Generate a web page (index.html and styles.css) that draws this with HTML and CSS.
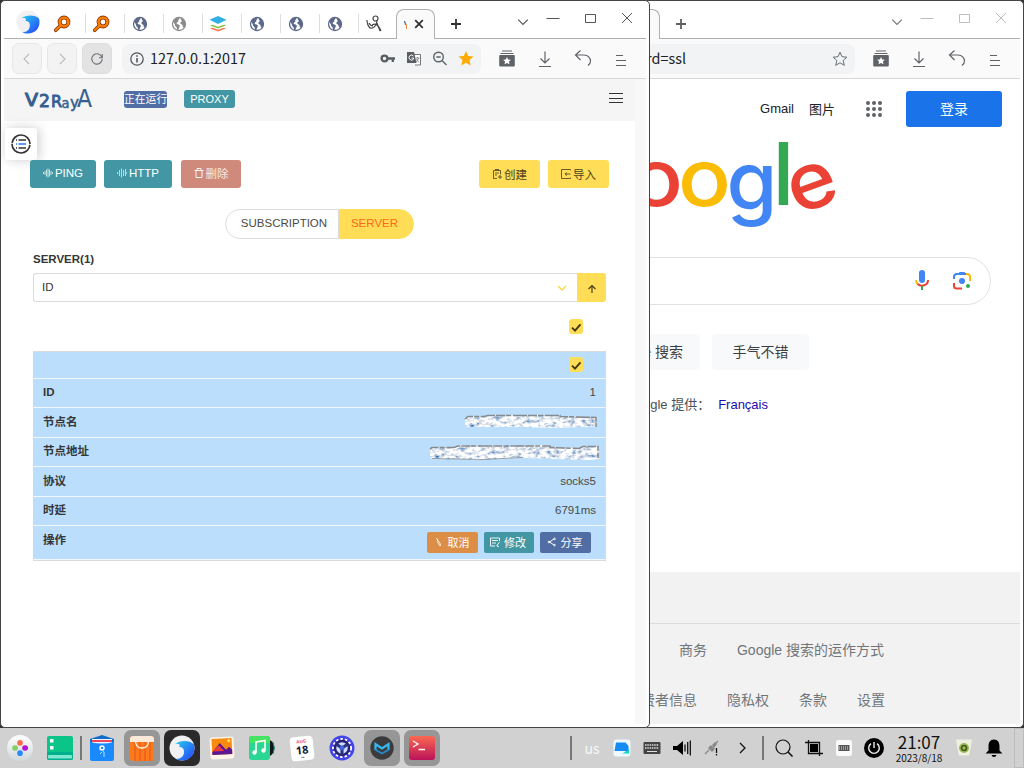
FILE: index.html
```html
<!DOCTYPE html>
<html lang="zh-CN">
<head>
<meta charset="utf-8">
<title>v2rayA</title>
<link rel="stylesheet" href="styles.css">
</head>
<body>
<svg class="defs" width="0" height="0">
  <defs>
    <symbol id="globe" viewBox="0 0 16 16"><circle cx="8" cy="8" r="6.500" fill="#fff" stroke="currentColor" stroke-width="1.300"/><path fill="currentColor" d="M2 5.500 4.500 2.600 7.800 1.700 8.500 3 7 4.200 7.600 5.200 6 6.500 5.600 8 7.600 8.400 9 9.800 8.300 11.500 7.200 13.900 6 14 5.700 11.500 4.200 10 3.800 8.300zM9.600 3 11.500 2.600 14 5.500 14.400 9 12.800 11.800 11.600 10.600 11.500 9 9.500 7.800 9.600 6 11 5.200z"/></symbol>
    <symbol id="key-tab" viewBox="0 0 18 18"><g fill="none" stroke-linecap="round"><path d="M8 10 2.700 15.300" stroke="#7d3309" stroke-width="3.600"/><circle cx="11" cy="7" r="4.400" stroke="#8a3a0a" stroke-width="4"/><circle cx="11" cy="7" r="4.400" stroke="#ff7e00" stroke-width="2.400"/><path d="M8 10 2.700 15.300" stroke="#ff7e00" stroke-width="2"/></g></symbol>
    <symbol id="chev" viewBox="0 0 10 10"><path d="M1 3l4 4 4-4" fill="none" stroke="currentColor" stroke-width="1"/></symbol>
    <symbol id="plus" viewBox="0 0 12 12"><path d="M6 1v10M1 6h10" stroke="currentColor" stroke-width="1.800"/></symbol>
    <symbol id="win-min" viewBox="0 0 14 14"><path d="M.5 8.500h13" stroke="currentColor"/></symbol>
    <symbol id="win-max" viewBox="0 0 14 14"><path d="M2.500 4.500h10v8h-10z" fill="none" stroke="currentColor"/></symbol>
    <symbol id="win-close" viewBox="0 0 14 14"><path d="M2 3l10 10M12 3 2 13" stroke="currentColor"/></symbol>
    <symbol id="collect" viewBox="0 0 18 18"><path d="M4 1h10M2.500 3.500h13" stroke="currentColor" stroke-width="1.200"/><rect x="1.200" y="5" width="15.600" height="11.500" rx="1" fill="currentColor"/><path fill="#fff" d="M9 7l1.200 2.500 2.700.3-2 1.800.6 2.700L9 13l-2.500 1.300.6-2.700-2-1.800 2.700-.3z"/></symbol>
    <symbol id="down" viewBox="0 0 18 18"><path d="M9 1.500v11M4.500 8.500 9 13l4.500-4.500M3 16.500h12" fill="none" stroke="currentColor" stroke-width="1.200"/></symbol>
    <symbol id="undo" viewBox="0 0 18 18"><path d="M6.500.500 1.500 5l5 5M1.500 5H10c4 0 6.500 3 6.500 6 0 2-1 3.500-2.500 4.500" fill="none" stroke="currentColor" stroke-width="1.200"/></symbol>
    <symbol id="menu" viewBox="0 0 18 18"><path d="M4 5.500h7M4 10.500h10M4 15.500h10" stroke="currentColor" stroke-width="1.200"/></symbol>
    <symbol id="tick" viewBox="0 0 14 15"><path d="M3 8.700l3 3 5.500-6.300" fill="none" stroke="#43380f" stroke-width="1.900"/></symbol>
    <linearGradient id="sky" x1="0" y1="0" x2="1" y2="1"><stop offset="0" stop-color="#25cfe8"/><stop offset="1" stop-color="#283cff"/></linearGradient>
    <symbol id="wave" viewBox="0 0 26 26"><circle cx="13" cy="13" r="12.500" fill="#f1f1f3"/><path d="M6 9C11 5 21 5 25 9.500 27 18 22 25 13 25.500c-3 0-5-.7-6-1.500 5 0 8-3 8-7s-2-5-5-5c2-2 0-4-4-3z" fill="url(#sky)"/></symbol>
    <filter id="smear" x="0" y="0" width="1" height="1"><feTurbulence type="fractalNoise" baseFrequency=".16 .28" numOctaves="3" seed="8"/><feColorMatrix values="2.200 0 0 0 -.28  1.800 0 0 0 -.04  1.100 0 0 0 .35  0 0 0 0 1"/><feComposite in2="SourceGraphic" operator="in"/></filter>
  </defs>
</svg>

<section class="window google-window">
  <div class="tabs tabs-back">
    <div class="back-tab"></div>
    <svg class="plus"><use href="#plus"/></svg>
    <div class="win-ctl faded"><svg class="chev"><use href="#chev"/></svg><svg><use href="#win-min"/></svg><svg><use href="#win-max"/></svg><svg><use href="#win-close"/></svg></div>
  </div>
  <div class="toolbar">
    <div class="url url-back"><span>google.com/?gws_rd=ssl</span><svg class="i16" viewBox="0 0 16 16"><path fill="none" stroke="#6b6f73" d="M8 1.200l2 4.500 4.900.5-3.700 3.300 1.100 4.800L8 11.800l-4.300 2.500 1.100-4.800-3.700-3.300 4.900-.5z"/></svg></div>
    <div class="tools"><svg><use href="#collect"/></svg><svg><use href="#down"/></svg><svg><use href="#undo"/></svg><svg><use href="#menu"/></svg></div>
  </div>
  <main class="google">
    <header class="g-head"><span>Gmail</span><span class="g-img">图片</span>
      <svg class="grid" viewBox="0 0 16 16" fill="#5f6368"><circle cx="2" cy="2" r="2"/><circle cx="8" cy="2" r="2"/><circle cx="14" cy="2" r="2"/><circle cx="2" cy="8" r="2"/><circle cx="8" cy="8" r="2"/><circle cx="14" cy="8" r="2"/><circle cx="2" cy="14" r="2"/><circle cx="8" cy="14" r="2"/><circle cx="14" cy="14" r="2"/></svg>
      <b class="login">登录</b></header>
    <svg class="g-logo" viewBox="0 0 200 92">
      <text x="-4" y="66" fill="#ea4335" textLength="53" lengthAdjust="spacingAndGlyphs">o</text>
      <text x="44" y="66" fill="#fbbc05" textLength="53" lengthAdjust="spacingAndGlyphs">o</text>
      <text class="g-g" x="92.500" y="69.500" fill="#4285f4" textLength="51" lengthAdjust="spacingAndGlyphs">g</text>
      <text class="g-l" x="138.500" y="65" fill="#34a853">l</text>
      <text x="-24.500" y="18" fill="#ea4335" transform="translate(179.500 50) rotate(-20)" textLength="49" lengthAdjust="spacingAndGlyphs">e</text>
    </svg>
    <div class="g-search">
      <svg class="mic" viewBox="0 0 16 22"><rect x="5" y="0" width="6" height="13" rx="3" fill="#4285f4"/><path d="M2 10c0 2 .7 3.300 2 4.400" fill="none" stroke="#fbbc05" stroke-width="2"/><path d="M3.500 14c2.500 2.200 6.500 2.200 9 0 1-1 1.600-2.200 1.600-4" fill="none" stroke="#ea4335" stroke-width="2"/><path d="M8 16v4" stroke="#34a853" stroke-width="2"/></svg>
      <svg class="lens" viewBox="0 0 20 20" fill="none" stroke-width="2"><path d="M2 8V6c0-2 1-3 3-3h9" stroke="#4285f4"/><path d="M6 3l1.500-2h5L14 3z" fill="#4285f4"/><path d="M14 3h1c2 0 3 1 3 3v4" stroke="#fbbc05"/><path d="M2 12v3c0 2 1 2.500 3 2.500h5" stroke="#ea4335"/><circle cx="10" cy="10" r="3" fill="#4285f4"/><circle cx="16" cy="15" r="2" fill="#34a853"/></svg>
    </div>
    <div class="g-btns"><span>Google 搜索</span><span>手气不错</span></div>
    <div class="g-lang"><span>Google 提供：</span><a>Français</a></div>
    <footer><div class="f-place"></div><div class="f-row"><span>商务</span><span>Google 搜索的运作方式</span></div><div class="f-row f-two"><span>消费者信息</span><span>隐私权</span><span>条款</span><span>设置</span></div></footer>
  </main>
</section>

<section class="window v2-window">
  <div class="tabs">
    <svg class="brand"><use href="#wave"/></svg>
    <div class="tab"><svg><use href="#key-tab"/></svg></div>
    <div class="tab"><svg><use href="#key-tab"/></svg></div>
    <div class="tab"><svg class="blue"><use href="#globe"/></svg></div>
    <div class="tab"><svg class="gray"><use href="#globe"/></svg></div>
    <div class="tab"><svg viewBox="0 0 18 18"><path d="M9 10.500l8 3-8 3-8-3z" fill="#ff7b55"/><path d="M9 8.800l8 3-8 3-8-3z" fill="#fff"/><path d="M9 7.500l8 3-8 3-8-3z" fill="#8ac44a"/><path d="M9 5.800l8 3-8 3-8-3z" fill="#fff"/><path d="M9 1l8.500 3.700L9 9 .5 4.700z" fill="#31aee3"/></svg></div>
    <div class="tab"><svg class="blue"><use href="#globe"/></svg></div>
    <div class="tab"><svg class="blue"><use href="#globe"/></svg></div>
    <div class="tab"><svg class="blue"><use href="#globe"/></svg></div>
    <div class="tab last"><svg viewBox="0 0 18 18" fill="none" stroke="#484848" stroke-width="1.200"><path d="M2 5c0 3 1 6 3 8 3 1 7-2 7-8M4 8c1 2 2 3 4 3M7 10c3-2 6-1 9 6M12 8l3 8"/><circle cx="10.500" cy="3.500" r="2.500"/></svg></div>
    <div class="tab-active"><svg class="sliver" viewBox="0 0 3 10"><path d="M.5 1l2 4v4" fill="none" stroke="#e88a42"/><path d="M.5 1l1 4" stroke="#2860a0"/></svg><svg class="x" viewBox="0 0 10 10"><path d="M1.200 1.200l7.600 7.600M8.800 1.200 1.200 8.800" stroke="#333" stroke-width="1.800"/></svg></div>
    <svg class="plus"><use href="#plus"/></svg>
    <div class="win-ctl"><svg class="chev"><use href="#chev"/></svg><svg><use href="#win-min"/></svg><svg><use href="#win-max"/></svg><svg><use href="#win-close"/></svg></div>
  </div>
  <div class="toolbar">
    <div class="nav"><i><svg viewBox="0 0 12 12"><path d="M8 1 3 6l5 5"/></svg></i><i><svg viewBox="0 0 12 12"><path d="M4 1l5 5-5 5"/></svg></i><i class="reload"><svg viewBox="0 0 12 12"><path d="M11 4.500A5.200 5.200 0 1 0 11.200 6M11.300 1v3.700H8"/></svg></i></div>
    <div class="url">
      <svg class="i14" viewBox="0 0 14 14"><circle cx="7" cy="7" r="6.200" fill="none" stroke="#55585c" stroke-width="1.300"/><path d="M7 6v4.500M7 3.200v1.600" stroke="#55585c" stroke-width="1.600"/></svg>
      <span class="addr">127.0.0.1:2017</span>
      <svg class="i16" viewBox="0 0 16 16"><circle cx="4.500" cy="7.500" r="2.900" fill="none" stroke="#5a5d61" stroke-width="2.300"/><path d="M7 7.500h8M12.800 7.500V11" stroke="#5a5d61" stroke-width="2.300"/></svg>
      <svg class="i16" viewBox="0 0 16 16"><path d="M7 3.500h7.500V14H9" fill="#fff" stroke="#777"/><path d="M1 1h7l2.500 11H1z" fill="#5a5d61"/><path d="M7.500 5A2.500 2.500 0 1 0 7.600 8V7H5.500" fill="none" stroke="#fff"/><path d="M9.500 7h4M11.500 6v1M10 11l3-4M10.500 8l2.500 3.500" stroke="#777" fill="none" stroke-width=".8"/></svg>
      <svg class="i16" viewBox="0 0 16 16" fill="none" stroke="#5f6368" stroke-width="1.400"><circle cx="6.500" cy="6" r="4.800"/><path d="M10 9.500l4.500 4.500M4.300 6h4.400"/></svg>
      <svg class="i16" viewBox="0 0 16 16"><path fill="#ffaa00" d="M8 0l2.200 4.900 5.300.6-4 3.600 1.200 5.400L8 11.800l-4.700 2.700 1.200-5.400-4-3.600 5.300-.6z"/></svg>
    </div>
    <div class="tools"><svg><use href="#collect"/></svg><svg><use href="#down"/></svg><svg><use href="#undo"/></svg><svg><use href="#menu"/></svg></div>
  </div>
  <div class="page">
    <main class="app">
      <header class="app-head">
        <svg class="v-logo" viewBox="0 0 72 30"><g fill="#365f91" stroke="#365f91"><text x="1" y="20" font-size="17" stroke-width="1.100" textLength="13" lengthAdjust="spacingAndGlyphs">V</text><text x="15" y="21" font-size="17" stroke-width=".9" textLength="11" lengthAdjust="spacingAndGlyphs">2</text><text x="27" y="21" font-size="16" stroke-width=".9" textLength="11" lengthAdjust="spacingAndGlyphs">R</text><text x="37.500" y="21.500" font-size="14" stroke-width=".5" textLength="8" lengthAdjust="spacingAndGlyphs">a</text><text x="46" y="22" font-size="15" stroke-width=".5" textLength="9" lengthAdjust="spacingAndGlyphs">y</text><text x="53" y="21" font-size="24" stroke-width=".2" textLength="15" lengthAdjust="spacingAndGlyphs">A</text></g></svg>
        <span class="running">正在运行</span><span class="proxy">PROXY</span>
        <svg class="burger" viewBox="0 0 14 10"><path d="M0 .5h14M0 5.500h14M0 9.500h14" stroke="#333"/></svg>
      </header>
      <div class="float"><svg viewBox="0 0 20 20" fill="none"><circle cx="10" cy="10" r="9" stroke="#333" stroke-width="1.700" stroke-dasharray="27.270 1" stroke-dashoffset="-1"/><path d="M7.500 6H15M7.500 14H15M5 6h1M5 14h1" stroke="#333" stroke-width="1.300"/><path d="M7.500 10H15M5 10h1" stroke="#2b74ff" stroke-width="1.500"/></svg></div>
      <div class="actions">
        <span class="btn teal ping"><svg viewBox="0 0 10 10" stroke="#c3e2e6"><path d="M.5 4v2M2 3v4M3.500 1.500v7M5 .5v9M6.500 1.500v7M8 3v4M9.500 4v2"/></svg>PING</span>
        <span class="btn teal http"><svg viewBox="0 0 10 10" stroke="#d7edf0"><path d="M.5 4v2M2.500 2v6M4.500 .5v9M6.500 2v6M8.500 1v7M9.700 4v2" stroke-width=".8"/></svg>HTTP</span>
        <span class="btn red"><svg viewBox="0 0 10 10" fill="none" stroke="#fff"><path d="M.5 2.500h9M2 2.500v7h6v-7M3 2V.5h4V2" stroke-width=".9"/></svg>删除</span>
        <span class="btn yellow create"><svg viewBox="0 0 10 10" fill="none" stroke="#5a4d20"><path d="M5 9.500H1.500V1.500h7v4M3 .5h4M3 4h4M3 6h2M6 8h4M8 6v4" stroke-width=".9"/></svg>创建</span>
        <span class="btn yellow"><svg viewBox="0 0 10 10" fill="none" stroke="#5a4d20"><path d="M9.500 1.500v-1H.5v9h9v-1M9.500 5H4M6 3.500 4 5l2 1.500" stroke-width=".9"/></svg>导入</span>
      </div>
      <div class="switch"><span>SUBSCRIPTION</span><span class="on">SERVER</span></div>
      <div class="servers">
        <h2>SERVER(1)</h2>
        <div class="sort"><div class="select"><span>ID</span><svg viewBox="0 0 10 10"><path d="M1 3l4 4 4-4" fill="none" stroke="#ffd43b" stroke-width="1.300"/></svg></div><div class="up"><svg viewBox="0 0 10 10"><path d="M5 9V1.500M1.500 5 5 1.500 8.500 5" fill="none" stroke="#4d421a" stroke-width="1.200"/></svg></div></div>
        <div class="all"><svg class="check"><use href="#tick"/></svg></div>
        <div class="table">
          <div class="row r-check"><svg class="check"><use href="#tick"/></svg></div>
          <div class="row"><b>ID</b><span>1</span></div>
          <div class="row tall"><b class="cn">节点名</b><svg class="smear s1" viewBox="0 0 134 17"><path filter="url(#smear)" d="M1 5 4 3H20L24 2H96V3L133 4V14H118L94 15 54 14 3 14 1 12z"/><path d="M1 6 4 3.500H20L24 2.500H96V3.500L132 4.500V14" fill="none" stroke="#858a90" stroke-width="1.600" stroke-dasharray="9 1 5 2 14 1"/></svg></div>
          <div class="row"><b class="cn">节点地址</b><svg class="smear s2" viewBox="0 0 171 17"><path filter="url(#smear)" d="M1 5 3 3H25L29 1H121V3L150 4 154 2H170V15L160 16 94 14 54 16 3 15 1 12z"/><path d="M1 5 3 3.500H25L29 2H121V3.500L150 4.500 154 2.500H169V14" fill="none" stroke="#858a90" stroke-width="1.600" stroke-dasharray="9 1 5 2 14 1"/><path d="M3 14.500l51 1 40-2" fill="none" stroke="#858a90" stroke-width=".8"/></svg></div>
          <div class="row tall"><b class="cn">协议</b><span>socks5</span></div>
          <div class="row"><b class="cn">时延</b><span>6791ms</span></div>
          <div class="row r-ops"><b>操作</b><div class="ops">
            <span class="orange"><svg viewBox="0 0 10 10" fill="none" stroke="#fff"><path d="M2.500 1 4 4l2 2 .5 3M3.500 2l.5 4 2 3" stroke-width=".8"/></svg>取消</span>
            <span class="teal"><svg viewBox="0 0 10 10" fill="none" stroke="#fff"><path d="M9.500 4V1H.5v8H5M2 3.500h6M2 6h4M6.500 9l3-4M7 9.300h2" stroke-width=".9"/></svg>修改</span>
            <span class="indigo"><svg viewBox="0 0 10 10" fill="none" stroke="#fff"><path d="M7 2 2.500 5 7 8"/><circle cx="7.500" cy="1.900" r=".8"/><circle cx="1.900" cy="5" r=".8"/><circle cx="7.500" cy="8.100" r=".8"/></svg>分享</span></div></div>
        </div>
      </div>
    </main>
    <div class="gutter"></div>
  </div>
</section>

<nav class="dock">
  <div class="slot"><svg viewBox="0 0 36 36"><defs><linearGradient id="lg" x2="0" y2="1"><stop stop-color="#fff"/><stop offset="1" stop-color="#cfd8da"/></linearGradient></defs><circle cx="18" cy="18" r="13" fill="url(#lg)"/><g stroke-width="5.600" stroke-linecap="round"><path d="M18 12.800v.2" stroke="#ff6c4c"/><path d="M13 18h.2" stroke="#88cc66"/><path d="M23 18h.2" stroke="#b414cf"/><path d="M18 23v.2" stroke="#2789ff"/></g></svg></div>
  <div class="slot"><svg viewBox="0 0 36 36"><rect x="5" y="6" width="26" height="24" rx="2" fill="#0ac488"/><path d="M5 22h26v6q0 2-2 2H7q-2 0-2-2z" fill="#00b08c"/><rect x="6" y="25" width="24" height="3.500" rx="1" fill="#7ee8d0"/><path d="M8 9h3.500v3.500H8zM8 16h3.500v3.500H8z" fill="#fff"/></svg></div>
  <i class="sep"></i>
  <div class="slot"><svg viewBox="0 0 36 36"><path d="M6 9 18 5l12 4v8H6z" fill="#136cc6"/><path d="M8 9h20v8H8z" fill="#eef1ff"/><path d="M8 10h20v2H8z" fill="#ee4860"/><path d="M6 12q12 3 24 0v17q0 2-2 2H8q-2 0-2-2z" fill="#1989fc"/><circle cx="18" cy="18" r="2" fill="none" stroke="#fff" stroke-width="1.500"/><path d="M18 20l2 2v5M18 22l-2 2" stroke="#b8e3ff" fill="none"/></svg></div>
  <div class="slot hot"><svg viewBox="0 0 36 36"><rect x="6" y="6" width="24" height="25" rx="3" fill="#fc7a1e"/><path d="M11 12v19M16 12v19M21 12v19M26 12v19" stroke="#f2651a" stroke-width="2"/><path d="M6 12V9q0-3 3-3h18q3 0 3 3v3z" fill="#fae8d9"/><path d="M11.500 12c1 8 12 8 13 0" fill="none" stroke="#fff0df" stroke-width="1.300"/></svg></div>
  <div class="slot black"><svg viewBox="-5 -5 36 36"><use href="#wave" width="26" height="26"/></svg></div>
  <div class="slot"><svg viewBox="0 0 36 36"><g transform="rotate(-3 18 18)"><rect x="6" y="7" width="24" height="22" rx="3" fill="#fff4e9"/><path d="M8 8.500h20v16H8z" fill="#f98a10"/><path d="m8 22 8-9 6 7 3-3 3 3v4.500H8z" fill="#5b1694"/><path d="m8 21 7-6 5 6H8z" fill="#e83c3c"/><circle cx="25" cy="11" r="1.500" fill="#ffe66c"/></g></svg></div>
  <div class="slot"><svg viewBox="0 0 36 36"><circle cx="21" cy="18" r="9.500" fill="#10171c"/><path d="M29 12q2.500 6 0 12" stroke="#06947a" fill="none"/><rect x="5" y="6" width="21" height="24" rx="3" fill="#2bd593"/><path d="M5 13V9q0-3 3-3h15q3 0 3 3v4z" fill="#42e462"/><path d="M12 22V12l9-1.500V20" fill="none" stroke="#fff" stroke-width="1.600"/><circle cx="10.500" cy="22.500" r="2.200" fill="#fff"/><circle cx="19.500" cy="20.500" r="2.200" fill="#fff"/></svg></div>
  <div class="slot"><svg class="cal" viewBox="0 0 36 36"><g transform="rotate(-6 18 18)"><rect x="6.500" y="6.500" width="23" height="24" rx="4" fill="#fff"/><text x="18" y="13" fill="#f15668" font-size="4.500">AUG</text><text x="18" y="24" fill="#15203b" font-size="11">18</text><path d="M16.500 27.500h3" stroke="#777"/></g></svg></div>
  <div class="slot"><svg viewBox="0 0 36 36"><circle cx="18" cy="18" r="11.500" fill="#4238e8" stroke="#4248e8" stroke-width="2"/><circle cx="18" cy="18" r="9" fill="none" stroke="#fff" stroke-width="2" stroke-dasharray="2.500 2"/><circle cx="18" cy="18" r="7" fill="#d1dcff" stroke="#26246e" stroke-width="2.500"/><path d="M18 18v7M18 18l-6-4M18 18l6-4" stroke="#28317c" stroke-width="3"/><circle cx="18" cy="18" r="2.500" fill="#4462db"/></svg></div>
  <div class="slot hot"><svg viewBox="0 0 36 36"><circle cx="18" cy="18" r="11.700" fill="#3b3b3b"/><path d="m11.500 20v-6l6.500 4.500 6.500-4.500v6" fill="none" stroke="#35baf2" stroke-width="2.200"/><path d="m11 19.500 7 4 7-4" fill="none" stroke="#258bce" stroke-width="1.800"/></svg></div>
  <div class="slot hot"><svg viewBox="0 0 36 36"><defs><linearGradient id="tg" x2="0" y2="1"><stop stop-color="#fa6950"/><stop offset="1" stop-color="#bb125b"/></linearGradient></defs><rect x="5" y="6" width="26" height="24" rx="3" fill="url(#tg)"/><path d="m9 11 5 3-5 3M14.500 19.500H21" fill="none" stroke="#fff" stroke-width="1.300"/></svg></div>
  <div class="tray">
    <i class="sep"></i>
    <div class="cell us">us</div>
    <div class="cell"><svg viewBox="0 0 20 20"><rect x="1.500" y="1.500" width="17" height="17" rx="3" fill="#eef9ff"/><path d="M4 4.500h9.500l3 3.500v7h-2l-1-2H2.500z" fill="#168bf4"/><path d="M10 15.500h7V10l-1 2.500z" fill="#13d9c0"/></svg></div>
    <div class="cell"><svg viewBox="0 0 20 20"><rect x="1.500" y="4" width="17" height="12" rx="1" fill="#444"/><path d="M3 7h14M3 10h14" stroke="#ddd" stroke-width="1.300" stroke-dasharray="1.500 .8"/><path d="M5 13.500h10" stroke="#ddd"/></svg></div>
    <div class="cell"><svg viewBox="0 0 20 20"><path d="M1 8h4l6-5v14l-6-5H1z"/><path d="M13 6.500v7M15.700 4v12M18.300 2.500v15" stroke="#111" stroke-width="1.300"/></svg></div>
    <div class="cell"><svg viewBox="0 0 20 20"><path d="m3 16 4-4M11 8l5-5" stroke="#888" stroke-width="1.300"/><path d="m6 10 3-3 4 4-3 3zM10 7l3-3 2 2-3 4z" fill="#888"/><path d="M14.500 10v5M14.500 16v1.500" stroke="#111" stroke-width="1.300"/></svg></div>
    <div class="cell"><svg viewBox="0 0 20 20"><path d="m8 5 5 5-5 5" fill="none" stroke="#111" stroke-width="1.300"/></svg></div>
    <i class="sep mid"></i>
    <div class="cell"><svg viewBox="0 0 20 20"><circle cx="9" cy="9" r="7" fill="none" stroke="#111" stroke-width="1.200"/><path d="m14 14 4.500 4.500" stroke="#111" stroke-width="1.600"/></svg></div>
    <div class="cell"><svg viewBox="0 0 20 20"><path d="M1 4.500h14.500v13.500M4.500 2v13.500H19" fill="none" stroke="#111" stroke-width="1.300"/><path d="M6 6h8v8H6z"/></svg></div>
    <div class="cell"><svg viewBox="0 0 20 20"><rect x="2" y="2" width="16" height="16" rx="2" fill="#fafafa"/><path d="M4.500 7h11v6h-11z" fill="#555"/><path d="M5 9h10M5 11h10" stroke="#ddd" stroke-dasharray="1 1"/></svg></div>
    <div class="cell"><svg viewBox="0 0 20 20"><circle cx="10" cy="10" r="10"/><path d="M7 5.700a5.300 5.300 0 1 0 6 0M10 4v6" fill="none" stroke="#eee" stroke-width="1.400"/></svg></div>
    <div class="clock"><span>21:07</span><small>2023/8/18</small></div>
    <div class="cell"><svg viewBox="0 0 20 20"><path d="M2 1.500h16l-2.500 15q0 1-1 1h-9q-1 0-1-1z" fill="#eef1df"/><circle cx="10" cy="10" r="5" fill="#9eba59"/><circle cx="10" cy="10" r="2.500" fill="none" stroke="#425a17" stroke-width="1.700"/></svg></div>
    <div class="cell"><svg viewBox="0 0 20 20"><path d="M10 1.500c4 0 5.500 3 5.500 7v4l3 3H1.500l3-3v-4c0-4 1.500-7 5.500-7zM7.500 17h5q-.5 2-2.500 2t-2.500-2"/></svg></div>
    <div class="desk"></div>
  </div>
</nav>
</body>
</html>
```

FILE: styles.css
```css
* { box-sizing: border-box; }
body { margin: 0; width: 1024px; height: 768px; overflow: hidden; position: relative; background: #333; font-family: "Liberation Sans", "Noto Sans CJK SC", sans-serif; color: #4a4a4a; }
svg { display: block; flex: none; }
i { font-style: normal; }
.defs { position: absolute; }

/* Window frames */
.window { position: absolute; top: 0; height: 728px; background: #fff; border: 1px solid #454545; border-radius: 5px; padding: 2px 3px 3px; display: flex; flex-direction: column; overflow: hidden; }
.google-window { left: 373px; width: 651px; }
.v2-window { left: 0; width: 650px; }
.tabs { height: 36px; flex: none; border-bottom: 1px solid #b0b0b0; display: flex; align-items: center; padding-top: 6px; }
.brand { width: 24px; height: 24px; margin: -4px 7px 0 12px; }
.tab { width: 39px; height: 19px; border-right: 1px solid #ddd; padding-left: 6px; display: flex; align-items: center; }
.tab svg { width: 18px; height: 18px; }
.tab .blue, .tab .gray { width: 16px; height: 16px; margin-left: 1px; }
.blue { color: #5c6889; }
.gray { color: #8b8b8b; }
.tab.last { width: 37px; border: 0; }
.tab-active { align-self: flex-end; width: 39px; height: 30px; margin-bottom: -1px; border: 1px solid #b0b0b0; border-bottom: 0; border-radius: 8px 8px 0 0; background: #fafafa; display: flex; align-items: center; padding-left: 7px; gap: 7px; }
.sliver { width: 3px; height: 10px; }
.tab-active .x { width: 10px; height: 10px; margin-top: -1px; }
.plus { width: 12px; height: 12px; margin-left: 15px; color: #333; }
.win-ctl { margin: -9px 12px 0 auto; display: flex; gap: 23px; color: #555; }
.win-ctl svg { width: 14px; height: 14px; }
.win-ctl .chev { width: 12px; height: 12px; margin: 6px -6px 0 0; }
.faded { color: #bdbdbd; }
.faded .chev { color: #777; }
.tabs-back .plus { color: #5f5f5f; }
.back-tab { align-self: flex-end; width: 283px; height: 30px; margin-bottom: -1px; background: #fafafa; border: 1px solid #b0b0b0; border-bottom: 0; border-radius: 8px 8px 0 0; }
.toolbar { height: 40px; flex: none; background: #fafafa; border-bottom: 1px solid #d8d8d8; display: flex; align-items: center; padding: 0 16px 0 8px; }
.nav { display: flex; gap: 5px; margin-right: 10px; }
.nav i { width: 30px; height: 31px; border: 1px solid #e7e7e7; border-radius: 7px; background: #f3f3f3; display: grid; place-items: center; }
.nav .reload { background: #e3e3e3; border-color: #ddd; }
.nav svg { width: 12px; height: 12px; fill: none; stroke: #bbb; stroke-width: 1.1; }
.nav .reload svg { stroke: #6d7278; }
.url { width: 359px; height: 30px; border-radius: 8px; background: #f1f3f4; display: flex; align-items: center; gap: 10px; padding: 0 7px 0 8px; color: #202124; font: 14.4px/28px "Noto Sans CJK SC", sans-serif; }
.url .i14 { width: 14px; height: 14px; }
.url .i16 { width: 16px; height: 16px; }
.url .addr { flex: 1; margin-left: -4px; padding-bottom: 2px; }
.url-back { width: 470px; justify-content: flex-end; gap: 146px; }
.url-back span { padding-bottom: 2px; }
.tools { margin-left: auto; display: flex; gap: 20px; color: #5f6368; }
.tools svg { width: 18px; height: 18px; }
.page { flex: 1; display: flex; min-height: 0; }
.gutter { width: 11px; background: #f8f8f8; }

/* Server list app */
.app { flex: 1; position: relative; font-size: 11.5px; }
.app-head { height: 42px; background: #f5f5f5; display: flex; align-items: center; padding: 0 12px 2px 20px; }
.v-logo { width: 72px; height: 30px; margin: 3px 28px 0 0; font-family: "DejaVu Sans", sans-serif; overflow: visible; }
.running { width: 43px; height: 17px; line-height: 16px; background: #506da4; color: #fff; border-radius: 3px; font-size: 10.8px; text-align: center; white-space: nowrap; }
.proxy { width: 51px; height: 18px; line-height: 18px; background: #4397a5; color: #fff; border-radius: 3px; font-size: 11px; text-align: center; margin-left: 17px; }
.burger { width: 14px; height: 10px; margin: -2px 0 0 auto; }
.float { position: absolute; left: 1px; top: 49px; width: 32px; height: 32px; background: #fff; border-radius: 3px; box-shadow: 2px 0 12px rgba(0,0,0,.2); display: grid; place-items: center; }
.float svg { width: 20px; height: 20px; }
.actions { position: relative; display: flex; margin: 39px 26px 0; height: 28px; }
.btn { height: 28px; border-radius: 3px; display: flex; align-items: center; justify-content: center; gap: 2px; color: #fff; width: 60px; padding-bottom: 2px; }
.btn svg { width: 10px; height: 10px; }
.teal { background: #4397a5; }
.ping { width: 66px; margin-right: 8px; }
.http { width: 68px; margin-right: 9px; }
.red { background: #cf8a7b; color: #f8ebe8; padding-bottom: 3px; }
.yellow { width: 61px; background: #ffdd57; color: #4d421a; padding-bottom: 1px; }
.create { margin: 0 8px 0 auto; }
.switch { width: 189px; height: 30px; margin: 21px 0 0 221px; display: flex; line-height: 27px; border-radius: 15px; }
.switch span { width: 114px; text-align: center; border: 1px solid #dbdbdb; border-radius: 15px 0 0 15px; padding-left: 4px; }
.switch .on { width: 75px; padding: 0 4px 0 0; background: #ffdd57; border-color: #ffdd57; color: #ff6719; border-radius: 0 15px 15px 0; }
.servers { margin: 13px 29px 0; }
h2 { margin: 0 0 6px; font-size: 11.5px; line-height: 15px; color: #363636; }
.sort { display: flex; height: 29px; color: #363636; }
.select { flex: 1; border: 1px solid #dbdbdb; border-right: 0; border-radius: 3px 0 0 3px; display: flex; align-items: center; justify-content: space-between; padding: 0 10px 0 8px; }
.select span { padding-bottom: 2px; }
.sort svg { width: 10px; height: 10px; }
.up { width: 29px; background: #ffdd57; border-radius: 0 3px 3px 0; display: grid; place-items: center; padding-top: 2px; }
.all { height: 49px; padding: 17px 23px 0 0; display: flex; justify-content: flex-end; }
.check { width: 14px; height: 15px; border-radius: 3px; background: #ffdd57; }
.table { border: solid #dbdbdb; border-width: 1px 1px 1px 0; background: #badefb; }
.row { height: 29px; border-bottom: 1px solid #f2f7fb; display: flex; justify-content: space-between; align-items: center; padding: 0 9px 2px 10px; }
.row.tall { height: 30px; }
.row b { color: #363636; }
.row .cn { margin-bottom: 2px; }
.row.r-check { height: 27px; justify-content: flex-end; padding-right: 22px; }
.row.r-ops { height: 34px; padding: 0 14px 0 10px; }
.r-ops b { margin-bottom: 7px; }
.smear { height: 17px; }
.s1 { width: 134px; margin-right: -2px; }
.s2 { width: 171px; margin: 3px -4px 0 0; }
.ops { display: flex; gap: 6px; color: #fff; font-size: 11px; }
.ops span { height: 21px; width: 51px; border-radius: 2px; display: flex; align-items: center; justify-content: center; gap: 4px; padding: 0 2px 1px 0; }
.ops .teal { width: 50px; }
.ops svg { width: 10px; height: 10px; }
.orange { background: #dc8e46; }
.indigo { background: #506da4; }

/* Search page */
.google { flex: 1; min-height: 0; overflow: hidden; display: flex; flex-direction: column; align-items: flex-end; color: #3c4043; font-size: 14px; }
.g-head { display: flex; align-items: center; padding: 12px 18px 0 0; font-size: 13px; color: #202124; }
.g-head span { padding-bottom: 2px; }
.g-img { margin-left: 15px; }
.grid { width: 16px; height: 16px; margin: 0 24px 0 31px; }
.login { width: 96px; height: 36px; line-height: 36px; border-radius: 3px; background: #1a73e8; color: #fff; text-align: center; font-size: 14px; font-weight: normal; }
.g-logo { width: 200px; height: 92px; margin: 13px 186px 0 0; font: 500 79px Inter, sans-serif; overflow: visible; }
.g-g { font-size: 81px; }
.g-l { font-size: 87px; }
.g-search { width: 584px; height: 48px; margin: 25px 29px 0 0; border: 1px solid #dfe1e5; border-radius: 24px; display: flex; justify-content: flex-end; align-items: center; gap: 22px; padding-right: 18px; }
.mic { width: 16px; height: 22px; }
.lens { width: 20px; height: 20px; }
.g-btns { display: flex; gap: 12px; margin: 29px 211px 0 0; }
.g-btns span { height: 36px; line-height: 36px; padding: 0 17px; min-width: 97px; text-align: center; border-radius: 4px; background: #f8f9fa; }
.g-lang { display: flex; gap: 8px; margin: 25px 252px 0 0; font-size: 13px; line-height: 20px; color: #4d5156; }
.g-lang a { color: #1a0dab; }
footer { align-self: stretch; margin-top: auto; height: 152px; background: #f2f2f2; color: #70757a; }
.f-place { height: 52px; border-bottom: 1px solid #dadce0; }
.f-row { display: flex; justify-content: flex-end; gap: 30px; height: 50px; line-height: 52px; padding-right: 136px; }
.f-two { padding-right: 135px; }

/* Dock */
.dock { position: absolute; left: 0; top: 728px; width: 1024px; height: 40px; background: #d1d1d1; display: flex; align-items: center; }
.slot { width: 36px; height: 36px; margin: 0 2px; border-radius: 7px; }
.slot svg { width: 36px; height: 36px; }
.hot { background: #969696; }
.black { background: #2a2a2a; }
.sep { width: 2px; height: 24px; background: #777; }
.cal { font-family: "Noto Sans", sans-serif; font-weight: bold; text-anchor: middle; }
.tray { margin-left: auto; display: flex; align-items: center; height: 40px; }
.cell { width: 30px; height: 40px; display: grid; place-items: center; }
.cell svg { width: 20px; height: 20px; }
.us { margin-left: 5px; color: #f7f7f7; font: 14px "Noto Sans CJK SC", sans-serif; }
.mid { margin: 0 5px; }
.clock { width: 60px; text-align: center; font-family: "Noto Sans CJK SC", sans-serif; color: #111; display: flex; flex-direction: column; }
.clock span { font-size: 17px; line-height: 18px; padding-top: 1px; }
.clock small { font-size: 10px; line-height: 12px; padding-top: 1px; }
.desk { width: 10px; height: 40px; margin-left: 5px; border: 1px solid #bbb; }
```
